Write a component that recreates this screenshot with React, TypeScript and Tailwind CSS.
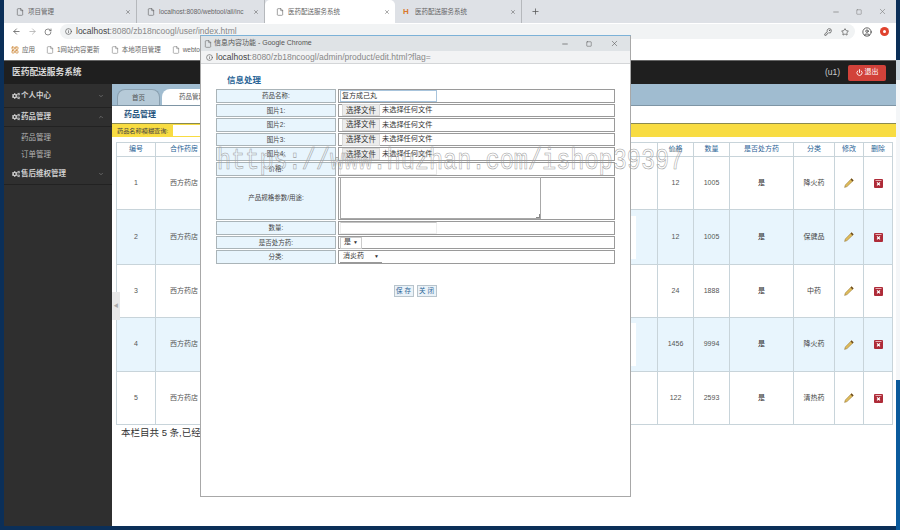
import React from 'react';
import { ArrowLeft, ArrowRight, RotateCw, Info, KeyRound, Star, CircleUser, File, X, Plus, Minus, Square, Power, ChevronDown, ChevronUp, LayoutGrid } from 'lucide-react';
import { FaCogs } from 'react-icons/fa';

const rows = [
  { id: 1, h: 'h-[53px]', price: '12', qty: '1005', rx: '是', cat: '降火药', alt: false },
  { id: 2, h: 'h-[55px]', price: '12', qty: '1005', rx: '是', cat: '保健品', alt: true },
  { id: 3, h: 'h-[53px]', price: '24', qty: '1888', rx: '是', cat: '中药', alt: false },
  { id: 4, h: 'h-[54px]', price: '1456', qty: '9994', rx: '是', cat: '降火药', alt: true },
  { id: 5, h: 'h-[53px]', price: '122', qty: '2593', rx: '是', cat: '清热药', alt: false },
];

function PencilIcon() {
  return (
    <svg width="10" height="10" viewBox="0 0 10 10" className="mx-auto">
      <path d="M7.6 0.6 L9.4 2.4 L3 8.6 L0.6 9.4 L1.3 7 Z" fill="#e0bd5a" stroke="#8a6a2a" strokeWidth="0.5" />
      <path d="M7.6 0.6 L9.4 2.4 L8.4 3.4 L6.6 1.6 Z" fill="#6b4a20" />
    </svg>
  );
}

function DeleteIcon() {
  return (
    <svg width="9" height="9" viewBox="0 0 9 9" className="mx-auto">
      <rect x="0" y="0" width="9" height="9" rx="1" fill="#ae2b38" />
      <rect x="1.5" y="1" width="6" height="1" fill="#e8b0b4" />
      <path d="M3 3.4 L6 6.4 M6 3.4 L3 6.4" stroke="#fff" strokeWidth="1.1" />
    </svg>
  );
}

function ChromeTab({ title, width, pad, active, favicon }: { title: string; width: string; pad: string; active?: boolean; favicon?: boolean }) {
  return (
    <div className={`${width} ${pad} h-[23px] flex items-center pr-[5px] gap-[4px] text-[6.5px] text-[#666] ${active ? 'bg-white rounded-t-[5px]' : 'border-r border-[#b5b8bc]'}`}>
      {favicon ? (
        <span className="w-[8px] text-[8px] font-bold text-[#d9782b]">H</span>
      ) : (
        <File size={8} strokeWidth={1.5} className="text-[#444] shrink-0" />
      )}
      <span className="flex-1 truncate">{title}</span>
      <X size={6} strokeWidth={2} className="text-[#555] shrink-0" />
    </div>
  );
}

function SideItem({ label, open, h }: { label: string; open?: boolean; h: string }) {
  return (
    <div className={`${h} flex items-center pl-[8px] pr-[8px] border-b border-[#222] text-[7.5px] font-bold text-[#cfcfcf]`}>
      <FaCogs size={8} className="mr-[1px]" />
      <span className="flex-1">{label}</span>
      {open ? <ChevronUp size={6} className="text-[#999]" /> : <ChevronDown size={6} className="text-[#999]" />}
    </div>
  );
}

function FormRow({ label, h, children }: { label: string; h: string; children: React.ReactNode }) {
  return (
    <div className={`${h} flex gap-[2px]`}>
      <div className="w-[120px] border border-[#aab4b8] bg-[#e8f5fd] flex items-center justify-center text-[6.5px] text-[#444]">{label}</div>
      <div className="flex-1 border border-[#9a9a9a] flex items-center text-[7px] text-[#333]">{children}</div>
    </div>
  );
}

function FileInput() {
  return (
    <div className="flex items-center gap-[2px]">
      <span className="w-[38px] h-[12px] ml-[3px] bg-[#ececec] border border-[#d8d8d8] flex items-center justify-center text-[7.5px] text-[#333]">选择文件</span>
      <span className="text-[7.2px] text-[#333]">未选择任何文件</span>
    </div>
  );
}

function Popup() {
  return (
    <div className="absolute left-[200px] top-[35px] w-[431px] h-[462px] bg-white border border-[#a8a8a8] border-t-[#7cb2d8] flex flex-col z-10">
      <div className="h-[15px] bg-[#dfe3e6] flex items-center pl-[3px] pr-[11px] text-[7px] text-[#555] shrink-0">
        <File size={8} strokeWidth={1.5} className="mr-[2px]" />
        <span className="flex-1">信息内容功能 - Google Chrome</span>
        <Minus size={8} className="mr-[17px]" />
        <Square size={6} className="mr-[18px]" />
        <X size={9} strokeWidth={1.5} />
      </div>
      <div className="h-[13px] bg-[#f2f3f4] border-b border-[#d4d6d8] flex items-center pl-[5px] text-[8.5px] text-[#888] shrink-0">
        <Info size={7} className="mr-[3px] text-[#555]" />
        <span className="text-[#444]">localhost</span>:8080/zb18ncoogl/admin/product/edit.html?flag=
      </div>
      <div className="px-[15px] pt-[10px]">
        <div className="h-[14px] pl-[11px] text-[8.5px] font-bold text-[#2a6496]">信息处理</div>
        <div className="flex flex-col gap-[1px] mt-[1px]">
          <FormRow label="药品名称:" h="h-[13.6px]">
            <span className="w-[97px] h-[12px] ml-[1px] border border-[#a8c4dc] text-[7px] leading-[10px] pl-[1px]">复方成己丸</span>
          </FormRow>
          <FormRow label="图片1:" h="h-[13.6px]"><FileInput /></FormRow>
          <FormRow label="图片2:" h="h-[13.6px]"><FileInput /></FormRow>
          <FormRow label="图片3:" h="h-[13.6px]"><FileInput /></FormRow>
          <FormRow label="图片4:" h="h-[13.6px]"><FileInput /></FormRow>
          <FormRow label="价格:" h="h-[13.6px]">
            <span className="w-[97px] h-[12px] ml-[1px] border border-[#e8e8e8]" />
          </FormRow>
          <FormRow label="产品规格参数/用途:" h="h-[43.6px]">
            <span className="w-[201px] h-[42px] ml-[1px] border border-[#a8a8a8] relative">
              <span className="absolute right-0 bottom-0 w-[4px] h-[4px] border-r border-b border-[#888]" />
            </span>
          </FormRow>
          <FormRow label="数量:" h="h-[13.6px]">
            <span className="w-[97px] h-[12px] ml-[1px] border border-[#eee] border-t-[#c4c4c4]" />
          </FormRow>
          <FormRow label="是否处方药:" h="h-[13.6px]">
            <span className="w-[22px] h-[12px] ml-[1px] border border-[#ccc] flex items-center justify-between px-[3px]">
              是<span className="text-[5px]">▼</span>
            </span>
          </FormRow>
          <FormRow label="分类:" h="h-[13.6px]">
            <span className="w-[42px] h-[12px] ml-[1px] border-b border-[#999] flex items-center justify-between px-[3px]">
              消炎药<span className="text-[5px]">▼</span>
            </span>
          </FormRow>
        </div>
        <div className="flex justify-center gap-[3px] mt-[21px] pr-[1px]">
          <span className="w-[20px] h-[12px] border border-[#b8c4cc] bg-[#eaf2f8] flex items-center justify-center text-[6.5px] whitespace-nowrap text-[#2a6496]">保 存</span>
          <span className="w-[20px] h-[12px] border border-[#b8c4cc] bg-[#eaf2f8] flex items-center justify-center text-[6.5px] whitespace-nowrap text-[#2a6496]">关 闭</span>
        </div>
      </div>
    </div>
  );
}

export default function App() {
  return (
    <div className="relative w-[900px] h-[530px] overflow-hidden bg-[#0b2f58] px-[4px] pb-[4px] font-['Liberation_Sans','Noto_Sans_CJK_SC',sans-serif]">
      {/* window behind the browser, seen at the right edge */}
      <div className="absolute right-0 top-0 w-[4px] h-[530px] flex flex-col">
        <div className="h-[60px] bg-[#0b2f58]" />
        <div className="h-[20px] bg-[#c8d4dc]" />
        <div className="h-[300px] bg-[#f4f6f8]" />
        <div className="flex-1 bg-[#0a5a9c]" />
      </div>
      <div className="w-[892px] h-[526px] bg-white flex flex-col">
        {/* chrome tabs */}
        <div className="h-[23px] bg-[#dee1e6] flex items-center shrink-0">
          <ChromeTab title="项目管理" width="w-[133px]" pad="pl-[12px]" />
          <ChromeTab title="localhost:8080/webtool/all/inc" width="w-[128px]" pad="pl-[10px]" />
          <ChromeTab title="医药配送服务系统" width="w-[130px]" pad="pl-[11px]" active />
          <ChromeTab title="医药配送服务系统" width="w-[127px]" pad="pl-[8px]" favicon />
          <Plus size={9} strokeWidth={2} className="text-[#555] ml-[9px]" />
          <div className="flex-1 flex justify-end items-center gap-[16px] pr-[9px] text-[#777]">
            <Minus size={8} />
            <Square size={6} />
            <X size={9} strokeWidth={1.5} />
          </div>
        </div>
        {/* address bar */}
        <div className="h-[17px] flex items-center pl-[8px] pr-[7px] text-[#555] shrink-0">
          <ArrowLeft size={9} className="mr-[7px]" />
          <ArrowRight size={9} className="mr-[7px] text-[#aaa]" />
          <RotateCw size={8} className="mr-[8px]" />
          <div className="w-[795px] h-[15px] bg-[#f1f3f4] rounded-full flex items-center pl-[5px] pr-[6px] text-[8.5px] text-[#888]">
            <Info size={7} className="mr-[4px] text-[#444]" />
            <span className="text-[#444]">localhost</span>:8080/zb18ncoogl/user/index.html
            <span className="flex-1" />
            <KeyRound size={8} className="mr-[9px] text-[#444]" />
            <Star size={8} className="text-[#444]" />
          </div>
          <CircleUser size={10} className="ml-[7px] text-[#444]" />
          <span className="ml-[8px] w-[9px] h-[9px] rounded-full bg-[#e0432f] flex items-center justify-center">
            <span className="w-[3px] h-[3px] rounded-full bg-white" />
          </span>
        </div>
        {/* bookmarks */}
        <div className="h-[20px] flex items-center pl-[4px] gap-[11px] text-[6.5px] text-[#666] shrink-0">
          <span className="flex items-center gap-[3px] ml-[3px]"><LayoutGrid size={8} className="text-[#c7791e]" />应用</span>
          <span className="flex items-center gap-[3px]"><File size={8} strokeWidth={1.5} />1网站内容更新</span>
          <span className="flex items-center gap-[3px]"><File size={8} strokeWidth={1.5} />本地项目管理</span>
          <span className="flex items-center gap-[3px]"><File size={8} strokeWidth={1.5} />webtool</span>
        </div>
        {/* app header */}
        <div className="h-[24px] bg-[#1f1f1f] border-t border-[#666] flex items-center pl-[8px] pr-[10px] shrink-0">
          <span className="flex-1 text-[8.7px] font-bold text-[#d8d8d8]">医药配送服务系统</span>
          <span className="text-[8.5px] text-[#ccc] mr-[8px]">(u1)</span>
          <span className="w-[38px] h-[16px] rounded-[2px] bg-[#d2423a] flex items-center justify-center gap-[2px] text-[7px] text-white">
            <Power size={7} strokeWidth={3} />退出
          </span>
        </div>
        <div className="flex flex-1 min-h-0">
          {/* sidebar */}
          <div className="w-[108px] bg-[#2f2f2f] shrink-0">
            <SideItem label="个人中心" h="h-[24px]" />
            <SideItem label="药品管理" open h="h-[19px]" />
            <div className="h-[37px] flex flex-col gap-[9px] pl-[17px] pt-[7px] text-[7.5px] leading-[8px] text-[#b4b4b4]">
              <div>药品管理</div>
              <div>订单管理</div>
            </div>
            <SideItem label="售后维权管理" h="h-[21px]" />
          </div>
          {/* main */}
          <div className="flex-1 relative min-w-0">
            <div className="h-[22px] bg-[#a0bcd0] border-b border-[#7e95a5] flex items-end pl-[5px] gap-[2px]">
              <span className="w-[43px] h-[16px] bg-[#b6cad8] border border-[#8aa0b0] border-b-0 rounded-t-[8px] flex items-center justify-center text-[6.5px] text-[#555]">首页</span>
              <span className="w-[60px] h-[16px] bg-white rounded-t-[8px] flex items-center justify-center text-[6.5px] text-[#555]">药品管理</span>
            </div>
            <div className="h-[17px] pl-[12px] flex items-center text-[8px] font-bold text-[#23527c]">药品管理</div>
            <div className="h-[14px] bg-[#f8dc42] border-t border-[#8a8a50] flex items-center pl-[5px] text-[6.2px] text-[#444]">
              药品名称模糊查询:
              <span className="ml-[5px] w-[100px] h-[11px] bg-white" />
            </div>
            <div className="pl-[4px] pt-[5px]">
              <table className="w-[776px] table-fixed border-collapse text-[7px] text-[#555] text-center">
                <colgroup>
                  <col className="w-[39px]" />
                  <col className="w-[502px]" />
                  <col className="w-[36px]" />
                  <col className="w-[36px]" />
                  <col className="w-[64px]" />
                  <col className="w-[41px]" />
                  <col className="w-[29px]" />
                  <col className="w-[29px]" />
                </colgroup>
                <thead>
                  <tr className="h-[14px] text-[#2a6496]">
                    {['编号', '合作药房', '价格', '数量', '是否处方药', '分类', '修改', '删除'].map((t, i) => (
                      <th key={t} className={`border border-[#c8d4da] font-normal ${i === 1 ? 'text-left pl-[14px]' : ''}`}>{t}</th>
                    ))}
                  </tr>
                </thead>
                <tbody>
                  {rows.map((r) => (
                    <tr key={r.id} className={`${r.h} ${r.alt ? 'bg-[#e8f5fd]' : 'bg-white'}`}>
                      <td className="border border-[#c8d4da]">{r.id}</td>
                      <td className="border border-[#c8d4da] text-left pl-[14px]">
                        <div className="flex items-center justify-between pr-[21px]">
                          西方药店
                          {r.alt && <span className="w-[6px] h-[43px] bg-white" />}
                        </div>
                      </td>
                      <td className="border border-[#c8d4da]">{r.price}</td>
                      <td className="border border-[#c8d4da]">{r.qty}</td>
                      <td className="border border-[#c8d4da] text-[#222]">{r.rx}</td>
                      <td className="border border-[#c8d4da] text-[#444]">{r.cat}</td>
                      <td className="border border-[#c8d4da]"><PencilIcon /></td>
                      <td className="border border-[#c8d4da]"><DeleteIcon /></td>
                    </tr>
                  ))}
                </tbody>
              </table>
              <div className="pl-[5px] pt-[1px] text-[9.5px] text-[#333]">本栏目共 5 条,已经到底了</div>
            </div>
            <div className="absolute left-0 top-[208px] w-[8px] h-[28px] bg-[#e8e8e8] flex items-center justify-center text-[5px] text-[#aaa]">◀</div>
          </div>
        </div>
      </div>
      <Popup />
      {/* watermark */}
      <div className="absolute left-[217px] top-[143px] z-20 whitespace-nowrap origin-left scale-x-[0.785] font-['Liberation_Mono',monospace] text-[30px] leading-[36px] text-transparent [-webkit-text-stroke:0.6px_#a0a0a0]">
        https://www.huzhan.com/ishop39397
      </div>
    </div>
  );
}
